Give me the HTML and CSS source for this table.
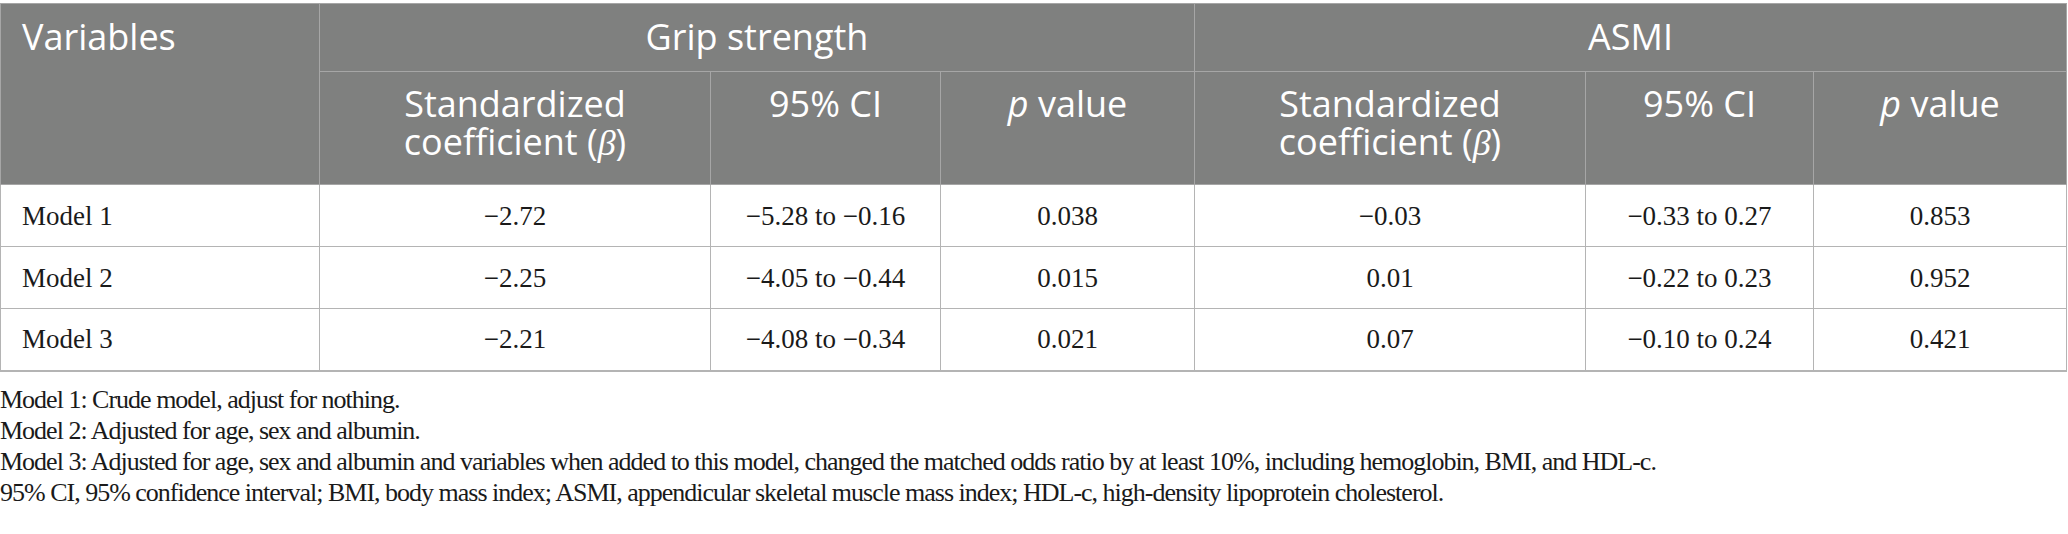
FILE: index.html
```html
<!DOCTYPE html>
<html lang="en">
<head>
<meta charset="utf-8">
<title>Table</title>
<link rel="stylesheet" href="styles.css">
</head>
<body>
<div class="page">
<table class="data">
  <colgroup>
    <col class="c-var">
    <col class="c-coef">
    <col class="c-ci">
    <col class="c-p">
    <col class="c-coef2">
    <col class="c-ci2">
    <col class="c-p2">
  </colgroup>
  <thead>
    <tr class="h1">
      <th rowspan="2" class="left">Variables</th>
      <th colspan="3">Grip strength</th>
      <th colspan="3">ASMI</th>
    </tr>
    <tr class="h2">
      <th>Standardized<br>coefficient (<i class="beta">β</i>)</th>
      <th>95% CI</th>
      <th><i>p</i> value</th>
      <th>Standardized<br>coefficient (<i class="beta">β</i>)</th>
      <th>95% CI</th>
      <th><i>p</i> value</th>
    </tr>
  </thead>
  <tbody>
    <tr>
      <td class="left">Model 1</td>
      <td>−2.72</td>
      <td>−5.28 to −0.16</td>
      <td>0.038</td>
      <td>−0.03</td>
      <td>−0.33 to 0.27</td>
      <td>0.853</td>
    </tr>
    <tr>
      <td class="left">Model 2</td>
      <td>−2.25</td>
      <td>−4.05 to −0.44</td>
      <td>0.015</td>
      <td>0.01</td>
      <td>−0.22 to 0.23</td>
      <td>0.952</td>
    </tr>
    <tr>
      <td class="left">Model 3</td>
      <td>−2.21</td>
      <td>−4.08 to −0.34</td>
      <td>0.021</td>
      <td>0.07</td>
      <td>−0.10 to 0.24</td>
      <td>0.421</td>
    </tr>
  </tbody>
</table>
<div class="notes">
  <p>Model 1: Crude model, adjust for nothing.</p>
  <p>Model 2: Adjusted for age, sex and albumin.</p>
  <p>Model 3: Adjusted for age, sex and albumin and variables when added to this model, changed the matched odds ratio by at least 10%, including hemoglobin, BMI, and HDL-c.</p>
  <p>95% CI, 95% confidence interval; BMI, body mass index; ASMI, appendicular skeletal muscle mass index; HDL-c, high-density lipoprotein cholesterol.</p>
</div>
</div>
</body>
</html>
```

FILE: styles.css
```css
html, body {
  margin: 0;
  padding: 0;
  background: #ffffff;
}

.page {
  padding-top: 3px;
}

.data {
  width: 2066px;
  border-collapse: collapse;
  table-layout: fixed;
}

.c-var { width: 319px; }
.c-coef { width: 391px; }
.c-ci { width: 230px; }
.c-p { width: 254px; }
.c-coef2 { width: 391px; }
.c-ci2 { width: 228px; }
.c-p2 { width: 253px; }

.data th {
  background: #7f807f;
  color: #ffffff;
  font-family: "Open Sans", "Noto Sans", sans-serif;
  font-weight: 400;
  font-size: 36px;
  line-height: 38px;
  text-align: center;
  vertical-align: top;
  border: 1px solid #a6a6a6;
  padding: 0 10px;
}

.data .h1 th {
  height: 68px;
  padding-top: 14px;
  padding-bottom: 14px;
  box-sizing: border-box;
}

.data .h2 th {
  height: 113px;
  padding-top: 13px;
  box-sizing: border-box;
}

.data th.left {
  text-align: left;
  padding-left: 21px;
}

.beta {
  font-family: "Liberation Serif", serif;
  font-style: italic;
}

.data td {
  font-family: "Liberation Serif", "Times New Roman", serif;
  font-size: 27px;
  line-height: 30px;
  color: #1a1a1a;
  text-align: center;
  vertical-align: middle;
  height: 62px;
  box-sizing: border-box;
  border: 1px solid #b4b4b4;
  padding: 0 10px;
}

.data tbody tr:last-child td {
  border-bottom: 2px solid #b4b4b4;
}

.data td.left {
  text-align: left;
  padding-left: 21px;
}

.notes {
  font-family: "Liberation Serif", "Times New Roman", serif;
  font-size: 26px;
  line-height: 31px;
  letter-spacing: -1px;
  color: #1a1a1a;
  padding-top: 12px;
}

.notes p {
  margin: 0;
}
```
